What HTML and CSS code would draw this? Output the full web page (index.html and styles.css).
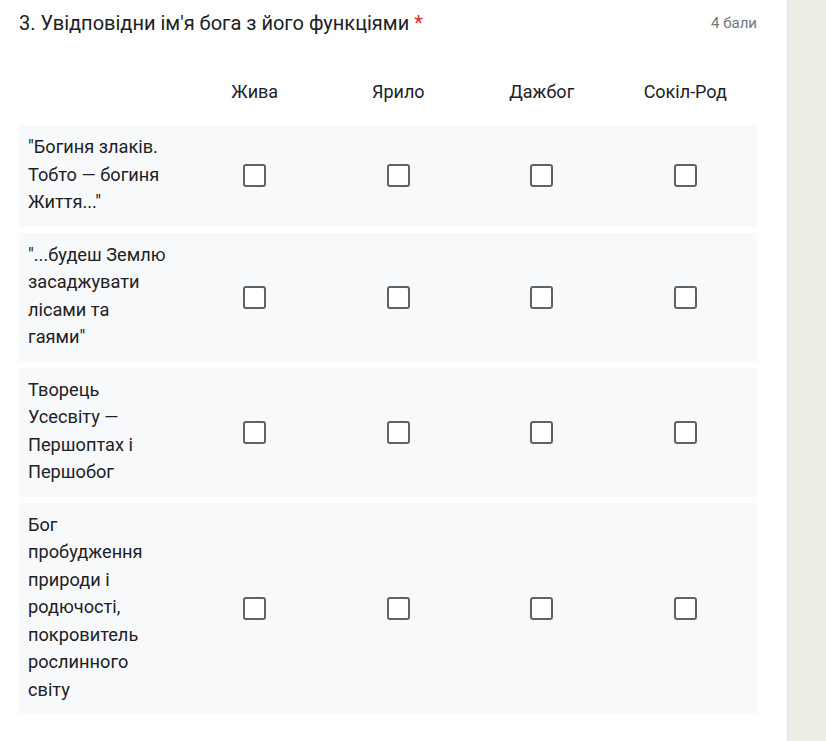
FILE: index.html
```html
<!DOCTYPE html>
<html lang="uk">
<head>
<meta charset="utf-8">
<title>Увідповідни ім'я бога</title>
<link rel="stylesheet" href="styles.css">
</head>
<body>
<div class="page">
  <main class="card">
    <div class="q-head">
      <div class="q-title">3. Увідповідни ім'я бога з його функціями <span class="req">*</span></div>
      <div class="q-points">4 бали</div>
    </div>
    <div class="grid">
      <div class="grid-row grid-header">
        <div class="cell-label"></div>
        <div class="col-label">Жива</div>
        <div class="col-label">Ярило</div>
        <div class="col-label">Дажбог</div>
        <div class="col-label">Сокіл-Род</div>
      </div>
      <div class="grid-row item">
        <div class="cell-label">"Богиня злаків. Тобто — богиня Життя..."</div>
        <div class="cell"><span class="box"></span></div>
        <div class="cell"><span class="box"></span></div>
        <div class="cell"><span class="box"></span></div>
        <div class="cell"><span class="box"></span></div>
      </div>
      <div class="grid-row item">
        <div class="cell-label">"...будеш Землю засаджувати лісами та гаями"</div>
        <div class="cell"><span class="box"></span></div>
        <div class="cell"><span class="box"></span></div>
        <div class="cell"><span class="box"></span></div>
        <div class="cell"><span class="box"></span></div>
      </div>
      <div class="grid-row item">
        <div class="cell-label">Творець Усесвіту — Першоптах і Першобог</div>
        <div class="cell"><span class="box"></span></div>
        <div class="cell"><span class="box"></span></div>
        <div class="cell"><span class="box"></span></div>
        <div class="cell"><span class="box"></span></div>
      </div>
      <div class="grid-row item">
        <div class="cell-label">Бог пробудження природи і родючості, покровитель рослинного світу</div>
        <div class="cell"><span class="box"></span></div>
        <div class="cell"><span class="box"></span></div>
        <div class="cell"><span class="box"></span></div>
        <div class="cell"><span class="box"></span></div>
      </div>
    </div>
  </main>
  <aside class="side"></aside>
</div>
</body>
</html>
```
FILE: styles.css
```css
html, body {
  margin: 0;
  padding: 0;
  height: 100%;
}
body {
  font-family: Roboto, "Liberation Sans", Arial, sans-serif;
  color: #202124;
  background: #ffffff;
}
.page {
  display: flex;
  min-height: 741px;
}
.card {
  width: 738px;
  padding: 0 30px 0 19px;
  flex: none;
}
.side {
  flex: 1;
  background: #eeede5;
  border-left: 1px solid #e2e2de;
}
.q-head {
  display: flex;
  justify-content: space-between;
  align-items: flex-start;
  padding-top: 10px;
}
.q-title {
  font-size: 20px;
  line-height: 26px;
}
.req {
  color: #d93025;
}
.q-points {
  font-size: 15px;
  color: #70757a;
  line-height: 26px;
}
.grid {
  display: flex;
  flex-direction: column;
  gap: 6px;
  margin-top: 29px;
}
.grid-row {
  display: grid;
  grid-template-columns: 164px repeat(4, 1fr);
  align-items: center;
}
.grid-header {
  height: 54px;
  align-items: start;
}
.col-label {
  text-align: center;
  font-size: 18px;
  line-height: 26px;
  padding-top: 14px;
}
.item {
  background: #f8f9fa;
  border-radius: 2px;
}
.cell-label {
  font-size: 18.2px;
  line-height: 27.5px;
  padding: 8px 15px 11px 9px;
}
.cell {
  display: flex;
  justify-content: center;
  align-items: center;
}
.box {
  width: 19px;
  height: 19px;
  border: 2.5px solid #5f6368;
  border-radius: 3px;
  background: #ffffff;
}
```
